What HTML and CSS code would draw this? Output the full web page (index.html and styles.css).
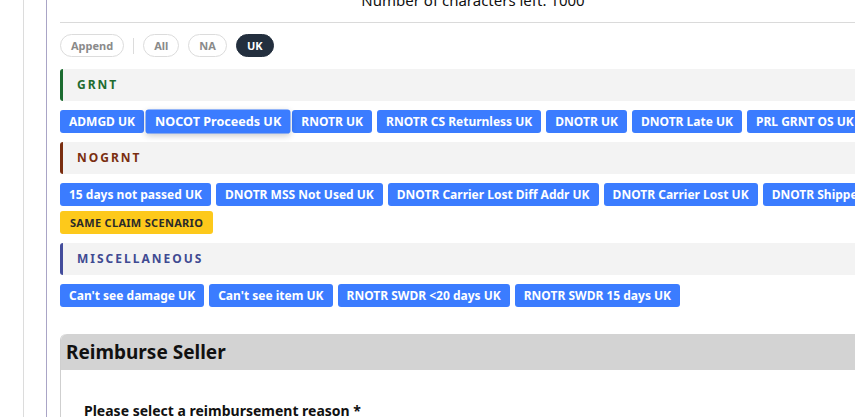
FILE: index.html
```html
<!DOCTYPE html>
<html lang="en">
    <head>
        <meta charset="UTF-8">
        <meta name="viewport" content="width=device-width, initial-scale=1.0">
        <title>Reimburse</title>
        <link rel="stylesheet" href="styles.css">
    </head>
    <body>
        <div class="shell">
            <div class="frame">
                <div class="content">
                    <div class="counter">Number of characters left: 1000</div>
                    <div class="rule"></div>

                    <div class="pills">
                        <span class="pill">Append</span>
                        <span class="pill-sep"></span>
                        <span class="pill">All</span>
                        <span class="pill">NA</span>
                        <span class="pill active">UK</span>
                    </div>

                    <div class="section-head grnt">GRNT</div>
                    <div class="btn-row">
                        <span class="btn">ADMGD UK</span>
                        <span class="btn hover">NOCOT Proceeds UK</span>
                        <span class="btn">RNOTR UK</span>
                        <span class="btn">RNOTR CS Returnless UK</span>
                        <span class="btn">DNOTR UK</span>
                        <span class="btn">DNOTR Late UK</span>
                        <span class="btn">PRL GRNT OS UK</span>
                    </div>

                    <div class="section-head nogrnt">NOGRNT</div>
                    <div class="btn-row">
                        <span class="btn">15 days not passed UK</span>
                        <span class="btn">DNOTR MSS Not Used UK</span>
                        <span class="btn">DNOTR Carrier Lost Diff Addr UK</span>
                        <span class="btn">DNOTR Carrier Lost UK</span>
                        <span class="btn">DNOTR Shipped UK</span>
                    </div>
                    <div class="btn-row tight">
                        <span class="btn warn">SAME CLAIM SCENARIO</span>
                    </div>

                    <div class="section-head misc">MISCELLANEOUS</div>
                    <div class="btn-row">
                        <span class="btn">Can't see damage UK</span>
                        <span class="btn">Can't see item UK</span>
                        <span class="btn">RNOTR SWDR &lt;20 days UK</span>
                        <span class="btn">RNOTR SWDR 15 days UK</span>
                    </div>

                    <div class="panel">
                        <div class="panel-head">Reimburse Seller</div>
                        <div class="panel-body">
                            <div class="label">Please select a reimbursement reason *</div>
                        </div>
                    </div>
                </div>
            </div>
        </div>
    </body>
</html>
```

FILE: styles.css
```css
body {
    margin: 0;
    font-family: "Noto Sans", "Open Sans", sans-serif;
    background-color: #fff;
    color: #111;
    overflow: hidden;
}

.shell {
    margin-left: 23px;
    border-left: 1px solid #dcdcdc;
    min-height: 100vh;
}

.frame {
    margin-left: 22px;
    border-left: 1px solid #aaa5c6;
    min-height: 100vh;
}

.content {
    padding-left: 13px;
    width: 826px;
}

.counter {
    margin-top: -10px;
    height: 20px;
    line-height: 20px;
    font-size: 15px;
    text-align: center;
    color: #111;
}

.rule {
    margin-top: 12px;
    border-top: 1px solid #dadada;
    width: 860px;
}

.pills {
    display: flex;
    align-items: center;
    gap: 9px;
    margin-top: 11px;
}

.pill {
    height: 21px;
    line-height: 21px;
    padding: 0 10px;
    border: 1px solid #dcdcdc;
    border-radius: 12px;
    font-size: 11px;
    font-weight: bold;
    color: #8a8a8a;
}

.pill.active {
    background-color: #232f3e;
    border-color: #232f3e;
    color: #fff;
}

.pill-sep {
    width: 1px;
    height: 16px;
    background-color: #dcdcdc;
}

.section-head {
    width: 860px;
    box-sizing: border-box;
    height: 32px;
    line-height: 32px;
    margin-top: 12px;
    padding-left: 14px;
    background-color: #f3f3f3;
    border-left: 3px solid;
    border-radius: 3px 0 0 3px;
    font-size: 12px;
    font-weight: bold;
    letter-spacing: 2px;
}

.btn-row + .section-head {
    margin-top: 9px;
}

.grnt {
    color: #1e6b30;
    border-left-color: #1b6b2f;
}

.nogrnt {
    color: #7a2e10;
    border-left-color: #7a2e10;
}

.misc {
    color: #3f4a92;
    border-left-color: #434d9c;
}

.btn-row {
    display: flex;
    gap: 5px;
    margin-top: 9px;
    white-space: nowrap;
}

.btn-row.tight {
    margin-top: 5px;
}

.btn {
    flex: none;
    height: 23px;
    line-height: 23px;
    padding: 0 9px;
    border-radius: 3px;
    background-color: #3b7cff;
    color: #fff;
    font-size: 12px;
    font-weight: bold;
}

.btn.hover {
    transform: scale(1.05);
    box-shadow: 0 2px 6px rgba(0, 0, 0, 0.2);
}

.btn.warn {
    background-color: #fdc91b;
    color: #2a2a2a;
    font-size: 11px;
    padding: 0 10px;
    letter-spacing: 0.3px;
}

.panel {
    margin-top: 27px;
    width: 860px;
    border-left: 1px solid #cfcfcf;
    border-radius: 6px 0 0 0;
}

.panel-head {
    height: 36px;
    line-height: 36px;
    padding-left: 5px;
    background-color: #d3d3d3;
    border-radius: 6px 0 0 0;
    font-size: 19px;
    font-weight: bold;
    color: #111;
}

.panel-body {
    padding: 31px 0 20px 23px;
}

.label {
    font-size: 14px;
    line-height: 20px;
    font-weight: bold;
    color: #111;
}
```
